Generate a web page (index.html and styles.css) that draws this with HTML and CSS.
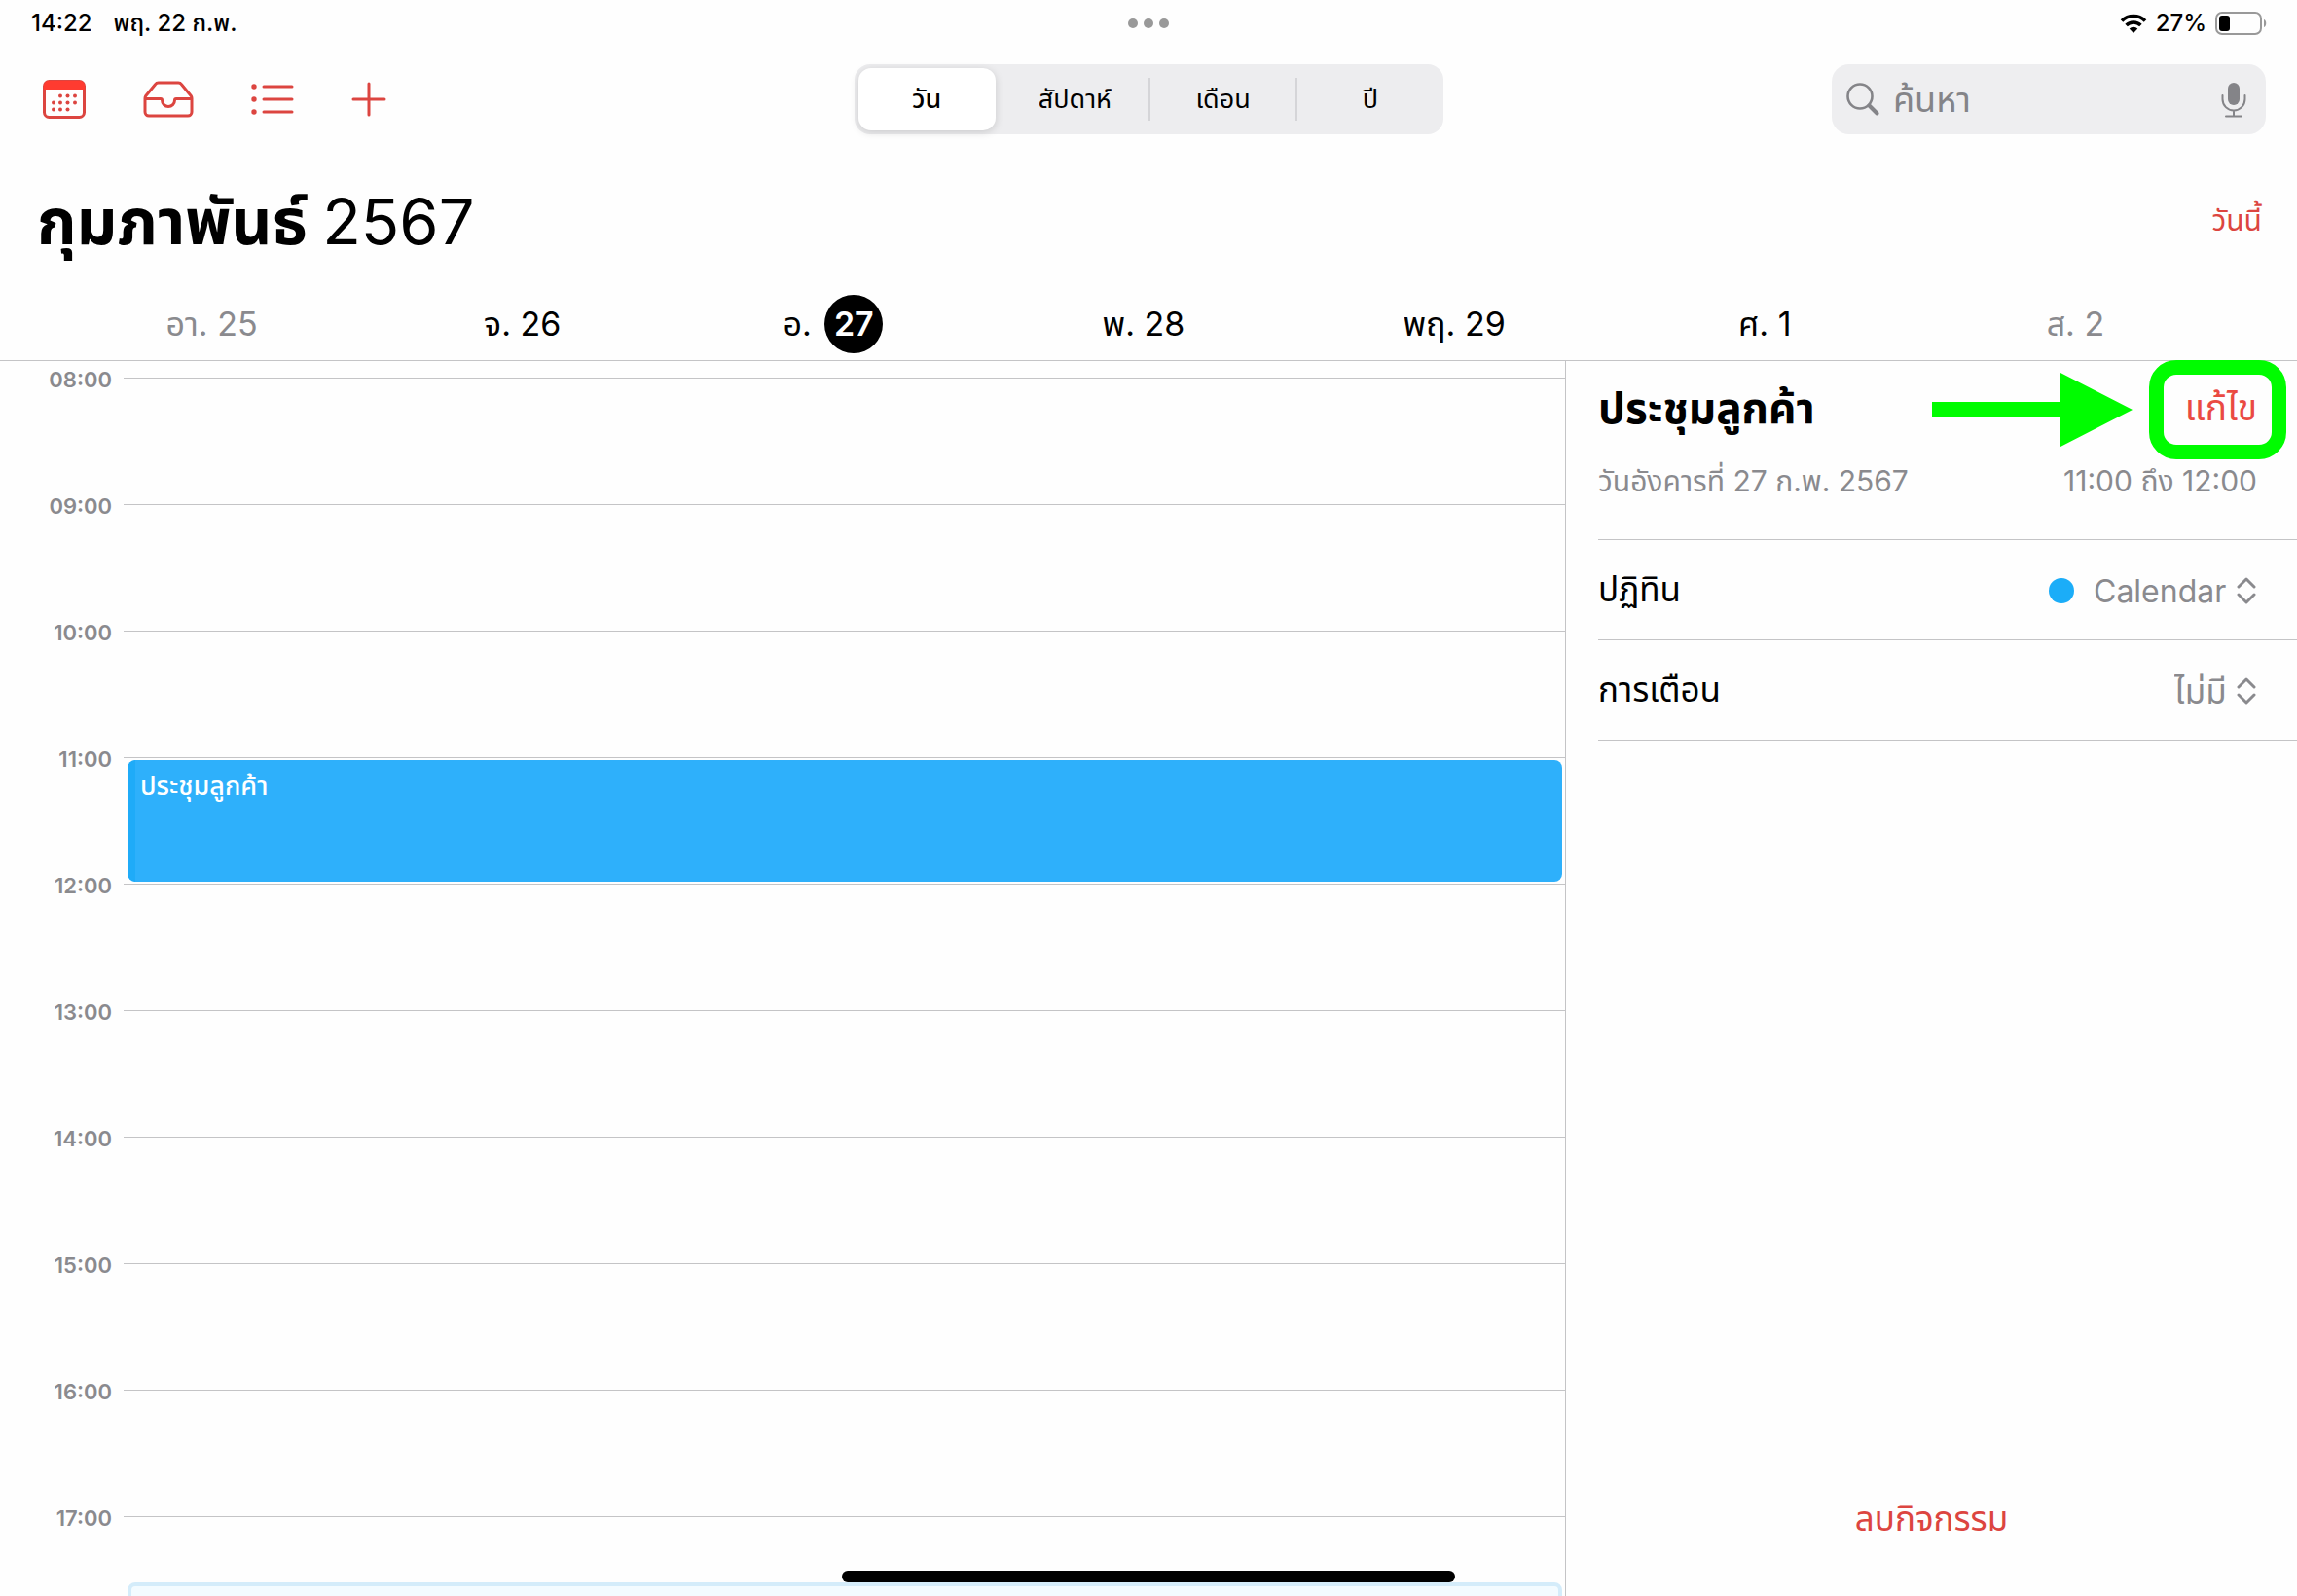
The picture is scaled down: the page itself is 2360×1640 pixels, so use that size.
FILE: index.html
```
<!DOCTYPE html>
<html lang="th">
  <head>
    <meta charset="UTF-8" />
    <meta name="viewport" content="width=device-width, initial-scale=1.0" />
    <title>ปฏิทิน</title>
    <link rel="stylesheet" href="styles.css">
  </head>
  <body>
    <div class="status">
      <div class="status-left">
        <span>14:22</span>
        <span>พฤ. 22 ก.พ.</span>
      </div>
      <div class="dots"><i></i><i></i><i></i></div>
      <div class="status-right">
        <svg width="28" height="20" viewBox="0 0 28 20">
          <path d="M2 7.500a17 17 0 0 1 24 0M6.600 12a10.500 10.500 0 0 1 14.800 0" fill="none" stroke="#000" stroke-width="3.600" />
          <path d="M14 20l-4.300-4.400a6 6 0 0 1 8.600 0z" />
        </svg>
        <span>27%</span>
        <svg width="54" height="24" viewBox="0 0 54 24">
          <rect x="1" y="1" width="46" height="22" rx="6" fill="none" stroke="#999" stroke-width="2" />
          <rect x="4" y="4" width="11" height="16" rx="3" />
          <path d="M50 8c3 1 3 7 0 8z" fill="#999" />
        </svg>
      </div>
    </div>

    <header class="toolbar">
      <nav class="tools">
        <button type="button" aria-label="ปฏิทิน">
          <svg width="44" height="40" viewBox="0 0 44 40">
            <rect x="1.500" y="1.500" width="41" height="37" rx="5" fill="none" stroke="#dc4540" stroke-width="3" />
            <path d="M1 10V6a5 5 0 0 1 5-5h32a5 5 0 0 1 5 5v4z" fill="#ff3b30" />
            <g fill="#dc4540">
              <circle cx="18" cy="16.500" r="2" /><circle cx="25.500" cy="16.500" r="2" /><circle cx="33" cy="16.500" r="2" />
              <circle cx="11" cy="23.500" r="2" /><circle cx="18" cy="23.500" r="2" /><circle cx="25.500" cy="23.500" r="2" /><circle cx="33" cy="23.500" r="2" />
              <circle cx="11" cy="30.500" r="2" /><circle cx="18" cy="30.500" r="2" /><circle cx="25.500" cy="30.500" r="2" />
            </g>
          </svg>
        </button>
        <button type="button" aria-label="กล่องเข้า">
          <svg width="52" height="38" viewBox="0 0 52 38" fill="none" stroke="#dc4540" stroke-width="3" stroke-linejoin="round">
            <path d="M2 18v14a4 4 0 0 0 4 4h40a4 4 0 0 0 4-4V18c0-1-.4-2-1-2.800L39.500 3.800A4 4 0 0 0 36 2H16a4 4 0 0 0-3.500 1.800L3 15.200C2.400 16 2 17 2 18z" />
            <path d="M2 18.500h16c1 0 1.500.5 1.500 1.500a6.500 6.500 0 0 0 13 0c0-1 .5-1.500 1.500-1.500h16" />
          </svg>
        </button>
        <button type="button" aria-label="รายการ">
          <svg width="44" height="32" viewBox="0 0 44 32" stroke="#dc4540" fill="#dc4540" stroke-linecap="round">
            <path d="M13 3h29M13 16h29M13 29h29" stroke-width="3" />
            <circle cx="3" cy="3" r="2.700" stroke="none" /><circle cx="3" cy="16" r="2.700" stroke="none" /><circle cx="3" cy="29" r="2.700" stroke="none" />
          </svg>
        </button>
        <button type="button" aria-label="เพิ่ม">
          <svg width="36" height="36" viewBox="0 0 36 36" stroke="#dc4540" stroke-width="3" stroke-linecap="round">
            <path d="M18 2v32M2 18h32" />
          </svg>
        </button>
      </nav>
      <div class="segments">
        <button type="button" class="active">วัน</button>
        <button type="button">สัปดาห์</button>
        <button type="button">เดือน</button>
        <button type="button">ปี</button>
      </div>
      <div class="search-area">
        <label class="search">
          <svg width="34" height="34" viewBox="0 0 34 34" fill="none" stroke="#848488" stroke-linecap="round">
            <circle cx="14" cy="14" r="12.500" stroke-width="2.600" />
            <path d="M23.500 23.500l8 8" stroke-width="4" />
          </svg>
          <input type="text" placeholder="ค้นหา" aria-label="ค้นหา" />
          <svg width="26" height="37" viewBox="0 0 26 37" fill="none" stroke="#848488" stroke-width="2">
            <rect x="7" y="1" width="12" height="23" rx="6" fill="#848488" stroke="none" />
            <path d="M1.500 14v4a11.500 11.500 0 0 0 23 0v-4M13 29.500V35M5 35.500h16" stroke-linecap="round" />
          </svg>
        </label>
      </div>
    </header>

    <div class="heading">
      <h1>กุมภาพันธ์ <span>2567</span></h1>
      <button type="button" class="today">วันนี้</button>
    </div>

    <div class="days">
      <span class="weekend">อา. 25</span>
      <span>จ. 26</span>
      <span>อ. <b>27</b></span>
      <span>พ. 28</span>
      <span>พฤ. 29</span>
      <span>ศ. 1</span>
      <span class="weekend">ส. 2</span>
    </div>

    <main>
      <section class="timeline">
        <div class="hour"><time>08:00</time><div class="slot"></div></div>
        <div class="hour"><time>09:00</time><div class="slot"></div></div>
        <div class="hour"><time>10:00</time><div class="slot"></div></div>
        <div class="hour"><time>11:00</time><div class="slot"><div class="event">ประชุมลูกค้า</div></div></div>
        <div class="hour"><time>12:00</time><div class="slot"></div></div>
        <div class="hour"><time>13:00</time><div class="slot"></div></div>
        <div class="hour"><time>14:00</time><div class="slot"></div></div>
        <div class="hour"><time>15:00</time><div class="slot"></div></div>
        <div class="hour"><time>16:00</time><div class="slot"></div></div>
        <div class="hour"><time>17:00</time><div class="slot half"><div class="tentative"></div></div></div>
      </section>

      <aside class="detail">
        <div class="summary">
          <div class="row">
            <h2>ประชุมลูกค้า</h2>
            <div class="edit-wrap">
              <button type="button" class="edit">แก้ไข</button>
              <!-- arrow and frame pointing at the edit button -->
              <svg class="arrow" width="206" height="76" viewBox="0 0 206 76" fill="#00fc00">
                <path d="M0 30h132V0l74 38-74 38V46H0z" />
              </svg>
              <div class="frame"></div>
            </div>
          </div>
          <div class="row when">
            <span>วันอังคารที่ 27 ก.พ. 2567</span>
            <span>11:00 ถึง 12:00</span>
          </div>
        </div>
        <div class="field">
          <label for="calendar">ปฏิทิน</label>
          <div class="value latin">
            <i class="color"></i>
            <select id="calendar"><option>Calendar</option></select>
            <svg width="20" height="28" viewBox="0 0 20 28"><path d="M2 10l8-8 8 8M2 18l8 8 8-8" /></svg>
          </div>
        </div>
        <div class="field">
          <label for="alert">การเตือน</label>
          <div class="value">
            <select id="alert"><option>ไม่มี</option></select>
            <svg width="20" height="28" viewBox="0 0 20 28"><path d="M2 10l8-8 8 8M2 18l8 8 8-8" /></svg>
          </div>
        </div>
        <button type="button" class="delete">ลบกิจกรรม</button>
      </aside>
    </main>
    <div class="home-bar"></div>
  </body>
</html>
```

FILE: styles.css
```
* {
  padding: 0;
  margin: 0;
  box-sizing: border-box;
}
body {
  height: 100vh;
  display: flex;
  flex-direction: column;
  overflow: hidden;
  background: #fefefe;
  color: #000;
  font-family: Inter, "Noto Sans Thai", "Noto Sans", sans-serif;
}
button,
input,
select {
  font: inherit;
  color: inherit;
  border: none;
  background: none;
  outline: none;
}
svg {
  display: block;
  flex: none;
}
.status {
  height: 48px;
  padding: 0 30px;
  display: grid;
  grid-template-columns: 1fr auto 1fr;
  align-items: center;
  font-size: 24px;
  font-weight: 500;
  line-height: 32px;
}
.status-left {
  display: flex;
  gap: 22px;
  padding-left: 2px;
}
.status-right {
  display: flex;
  align-items: center;
  justify-content: flex-end;
  gap: 9px;
}
.dots {
  display: flex;
  gap: 6px;
}
.dots i {
  width: 10px;
  height: 10px;
  border-radius: 50%;
  background: #999;
}
.toolbar {
  height: 108px;
  padding: 0 32px;
  display: grid;
  grid-template-columns: 1fr auto 1fr;
  align-items: center;
}
.tools {
  padding-left: 12px;
  display: flex;
  align-items: center;
  gap: 59px;
}
.segments {
  width: 605px;
  height: 72px;
  display: grid;
  grid-template-columns: repeat(4, 1fr);
  align-items: center;
  border-radius: 16px;
  background: #ededef;
}
.segments button {
  height: 44px;
  font-size: 27px;
}
.segments button + button + button {
  border-left: 2px solid #d5d5d8;
}
.segments .active {
  height: 64px;
  margin: 0 6px 0 4px;
  border-radius: 13px;
  background: #fff;
  font-weight: 500;
  box-shadow: 0 2px 8px rgba(0, 0, 0, 0.15);
}
.search-area {
  display: flex;
  justify-content: flex-end;
}
.search {
  width: 446px;
  height: 72px;
  padding: 0 20px 0 15px;
  display: flex;
  align-items: center;
  gap: 14px;
  border-radius: 18px;
  background: #eeeef0;
}
.search input {
  flex: 1;
  min-width: 0;
  height: 60px;
  font-size: 36px;
}
.search input::placeholder {
  color: #848488;
  opacity: 1;
}
.heading {
  height: 140px;
  padding: 4px 36px 0 38px;
  display: flex;
  align-items: center;
  justify-content: space-between;
}
h1 {
  font-size: 65px;
  line-height: 96px;
}
h1 span {
  font-weight: 400;
}
.today {
  font-size: 30px;
  color: #dc4540;
}
.days {
  height: 75px;
  padding: 0 68px 0 58px;
  display: grid;
  grid-template-columns: repeat(7, 1fr);
  align-items: center;
  border-bottom: 1px solid #c4c4c6;
  font-size: 34px;
  line-height: 60px;
  text-align: center;
}
.weekend {
  color: #8a8a8e;
}
.days b {
  display: inline-block;
  width: 60px;
  height: 60px;
  margin-left: 4px;
  border-radius: 50%;
  background: #000;
  color: #fff;
  font-weight: 600;
}
main {
  flex: 1;
  min-height: 0;
  display: grid;
  grid-template-columns: 1fr 752px;
}
.timeline {
  padding-top: 17px;
  overflow: hidden;
}
.hour {
  height: 130px;
  display: grid;
  grid-template-columns: 115px 1fr;
  gap: 12px;
}
.hour time {
  margin-top: -10px;
  font-size: 22px;
  font-weight: 600;
  line-height: 24px;
  text-align: right;
  color: #8a8a8e;
}
.slot {
  padding: 2px 3px 2px 4px;
  border-top: 1px solid #c4c4c6;
}
.event {
  height: 125px;
  padding: 8px 5px;
  border-left: 8px solid #1fabf8;
  border-radius: 8px;
  background: #2eb0fb;
  color: #fff;
  font-size: 27px;
  font-weight: 500;
  line-height: 38px;
}
.half {
  padding-top: 67px;
}
.tentative {
  height: 60px;
  border: 4px solid #d4ecfa;
  border-radius: 8px;
  background: #f3fbff;
}
.detail {
  padding-left: 33px;
  display: flex;
  flex-direction: column;
  border-left: 1px solid #c4c4c6;
}
.summary {
  height: 184px;
  padding: 16px 41px 0 0;
  border-bottom: 1px solid #c4c4c6;
}
.row {
  display: flex;
  align-items: center;
  justify-content: space-between;
}
h2 {
  font-size: 44px;
  line-height: 64px;
}
.edit-wrap {
  position: relative;
}
.edit {
  font-size: 37px;
  line-height: 64px;
  color: #ea4a42;
}
.arrow {
  position: absolute;
  right: 128px;
  top: -4px;
}
.frame {
  position: absolute;
  right: -30px;
  top: -17px;
  width: 141px;
  height: 102px;
  border: 15px solid #00fc00;
  border-radius: 28px;
}
.when {
  padding-top: 19px;
  font-size: 30px;
  line-height: 48px;
  color: #8a8a8e;
}
.field {
  height: 103px;
  padding: 2px 42px 0 0;
  display: flex;
  align-items: center;
  justify-content: space-between;
  border-bottom: 1px solid #c4c4c6;
  font-size: 35px;
}
.value {
  display: flex;
  align-items: center;
  color: #8a8a8e;
}
.value select {
  appearance: none;
  height: 60px;
  margin: 0 10px 0 20px;
}
.latin {
  font-size: 32px;
}
.value path {
  fill: none;
  stroke: #8a8a8e;
  stroke-width: 3;
  stroke-linecap: round;
  stroke-linejoin: round;
}
.color {
  width: 26px;
  height: 26px;
  border-radius: 50%;
  background: #1badf8;
}
.delete {
  margin: auto 33px 48px 0;
  font-size: 35px;
  line-height: 64px;
  color: #dc4540;
}
.home-bar {
  position: fixed;
  left: 50%;
  bottom: 14px;
  width: 630px;
  height: 12px;
  margin-left: -315px;
  border-radius: 6px;
  background: #000;
}
```
